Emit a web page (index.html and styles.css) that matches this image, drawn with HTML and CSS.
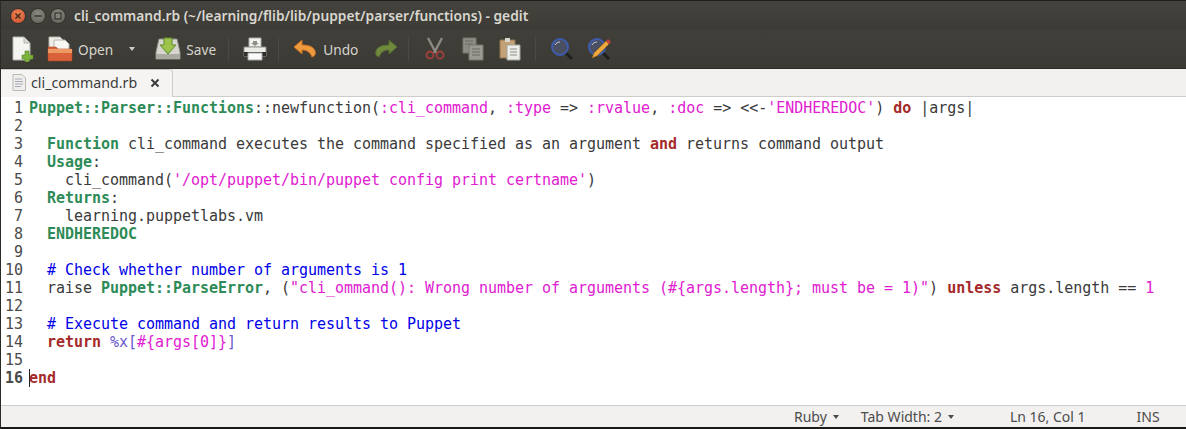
FILE: index.html
```html
<!DOCTYPE html>
<html lang="en">
<head>
<meta charset="utf-8">
<title>gedit</title>
<link rel="stylesheet" href="styles.css">
</head>
<body>
<div class="window">
  <header class="titlebar">
    <div class="wm">
      <span class="wm-btn close"><svg viewBox="0 0 10 10" width="10" height="10"><path d="M2.5 2.5l5 5M7.5 2.5l-5 5" stroke="#4a2a1c" stroke-width="1.6"/></svg></span>
      <span class="wm-btn"><svg viewBox="0 0 10 10" width="10" height="10"><path d="M1.5 5h7" stroke="#3b3a35" stroke-width="1.6"/></svg></span>
      <span class="wm-btn"><svg viewBox="0 0 10 10" width="10" height="10"><rect x="2" y="2" width="6" height="6" fill="none" stroke="#3b3a35" stroke-width="1.3"/></svg></span>
    </div>
    <span class="title">cli_command.rb (~/learning/flib/lib/puppet/parser/functions) - gedit</span>
  </header>

  <nav class="toolbar">
    <svg class="ic ic-new" viewBox="0 0 22 26" width="22" height="26"><path d="M1 1h11l6 6v17H1z" fill="#f4f4f0" stroke="#b5b5ae"/><path d="M12 1v6h6" fill="#d8d8d2" stroke="#b5b5ae"/><path d="M13 15h4v4h4v4h-4v3h-4v-3h-3v-4h3z" fill="#7cb33a" stroke="#56802a" stroke-width=".6"/></svg>
    <svg class="ic ic-open" viewBox="0 0 26 26" width="26" height="26"><path d="M2 1h11l4 4v8H2z" fill="#efefe9" stroke="#b5b5ae"/><path d="M7 4h11l4 4v6H7z" fill="#f7f7f3" stroke="#b5b5ae"/><path d="M1 11h8l2 2h14v12H1z" fill="#d9623a" stroke="#a9462a" stroke-width=".6"/><path d="M1 13h24v4H1z" fill="#ee9a63"/></svg>
    <span class="tb-label open-label">Open</span>
    <span class="arrow tb-arrow"></span>
    <svg class="ic ic-save" viewBox="0 0 26 26" width="26" height="26"><path d="M4 3h18l3 13v7H1v-7z" fill="#d6d6ce" stroke="#8d8d85"/><path d="M1 18h24v5H1z" fill="#a9a9a0"/><path d="M9 2h8v7h4l-8 9-8-9h4z" fill="#9cc44b" stroke="#5e8a2a"/></svg>
    <span class="tb-label save-label">Save</span>
    <span class="sep sep-a"></span>
    <svg class="ic ic-print" viewBox="0 0 24 24" width="24" height="24"><path d="M6 1h12v9H6z" fill="#f2f2ee" stroke="#aaa"/><path d="M10 4h4v2h2l-4 3-4-3h2z" fill="#8f8f88"/><path d="M1 10h22v9H1z" fill="#ecebe6" stroke="#8f8f88"/><path d="M1 15h22v4H1z" fill="#2e2e2a"/><path d="M5 16h14v7H5z" fill="#fafafa" stroke="#aaa"/></svg>
    <span class="sep sep-b"></span>
    <svg class="ic ic-undo" viewBox="0 0 24 20" width="24" height="20"><path d="M9 1L1 8l8 7v-4c5 0 8 2 10 7 3-1 4-3 3-6-1-4-6-6-13-6z" fill="#ee9a3e" stroke="#c96f22"/></svg>
    <span class="tb-label undo-label">Undo</span>
    <svg class="ic ic-redo" viewBox="0 0 24 20" width="24" height="20"><path d="M15 1l8 7-8 7v-4c-5 0-8 2-10 7-3-1-4-3-3-6 1-4 6-6 13-6z" fill="#6f8a3c" stroke="#556b2e"/></svg>
    <span class="sep sep-c"></span>
    <svg class="ic ic-cut" viewBox="0 0 20 24" width="20" height="24"><path d="M3 1l8 15M17 1L9 16" stroke="#8b8b84" stroke-width="2.4" fill="none"/><circle cx="5" cy="18" r="3.5" fill="none" stroke="#a33f3a" stroke-width="1.8"/><circle cx="15" cy="18" r="3.5" fill="none" stroke="#a33f3a" stroke-width="1.8"/></svg>
    <svg class="ic ic-copy" viewBox="0 0 22 24" width="22" height="24"><path d="M1 1h13v15H1z" fill="#8d8d86" stroke="#77776f"/><path d="M7 8h14v15H7z" fill="#9a9a93" stroke="#77776f"/><path d="M10 12h8M10 15h8M10 18h8M3 4h8M3 7h8" stroke="#6b6b64"/></svg>
    <svg class="ic ic-paste" viewBox="0 0 22 24" width="22" height="24"><path d="M1 3h15v18H1z" fill="#c2a176" stroke="#8f7450"/><path d="M6 1h5v4H6z" fill="#d9d9d2"/><path d="M8 8h13v15H8z" fill="#ececE8" stroke="#a5a59e"/><path d="M11 12h7M11 15h7M11 18h7" stroke="#8e8e87"/></svg>
    <span class="sep sep-d"></span>
    <svg class="ic ic-find" viewBox="0 0 24 24" width="24" height="24"><path d="M15 15l7 7" stroke="#1f1f1c" stroke-width="3"/><circle cx="10" cy="10" r="8" fill="#4a4f62" stroke="#3e5cb0" stroke-width="2"/><path d="M5 8c1-2 3-3 5-3" stroke="#c9d0e4" fill="none"/></svg>
    <svg class="ic ic-replace" viewBox="0 0 24 24" width="24" height="24"><path d="M15 15l7 7" stroke="#1f1f1c" stroke-width="3"/><circle cx="10" cy="10" r="8" fill="#4a4f62" stroke="#3e5cb0" stroke-width="2"/><path d="M5 8c1-2 3-3 5-3" stroke="#c9d0e4" fill="none"/><path d="M5 21l2-5L19 4l3 3L10 19z" fill="#eda93c" stroke="#8a5a1a" stroke-width=".6"/><path d="M19 4l2-2 3 3-2 2z" fill="#c9413a"/></svg>
  </nav>

  <div class="tabbar">
    <div class="tab">
      <svg viewBox="0 0 14 17" width="14" height="17"><path d="M1 .5h9l3.500 3.500v12.500H1z" fill="#eeeeea" stroke="#bbbbb4"/><path d="M3 5h7M3 7.500h8M3 10h8M3 12.500h6" stroke="#a9a9b8"/></svg>
      <span class="tab-name">cli_command.rb</span>
      <svg class="tab-x" viewBox="0 0 10 10" width="10" height="10"><path d="M1.500 1.500l7 7M8.500 1.500l-7 7" stroke="#3c3c3c" stroke-width="2"/></svg>
    </div>
  </div>

  <main class="editor">
    <div class="gutter">
      <div>1</div><div>2</div><div>3</div><div>4</div><div>5</div><div>6</div><div>7</div><div>8</div><div>9</div><div>10</div><div>11</div><div>12</div><div>13</div><div>14</div><div>15</div><div class="cur">16</div>
    </div>
    <div class="code">
      <div class="ln"><span class="t">Puppet::Parser::Functions</span>::newfunction(<span class="s">:cli_command</span>, <span class="s">:type</span> =&gt; <span class="s">:rvalue</span>, <span class="s">:doc</span> =&gt; &lt;&lt;-<span class="s">'ENDHEREDOC'</span>) <span class="k">do</span> |args|</div>
      <div class="ln"></div>
      <div class="ln">  <span class="t">Function</span> cli_command executes the command specified as an argument <span class="k">and</span> returns command output</div>
      <div class="ln">  <span class="t">Usage</span>:</div>
      <div class="ln">    cli_command(<span class="s">'/opt/puppet/bin/puppet config print certname'</span>)</div>
      <div class="ln">  <span class="t">Returns</span>:</div>
      <div class="ln">    learning.puppetlabs.vm</div>
      <div class="ln">  <span class="t">ENDHEREDOC</span></div>
      <div class="ln"></div>
      <div class="ln">  <span class="c"># Check whether number of arguments is 1</span></div>
      <div class="ln">  raise <span class="t">Puppet::ParseError</span>, (<span class="s">"cli_ommand(): Wrong number of arguments (#{args.length}; must be = 1)"</span>) <span class="k">unless</span> args.length == <span class="s">1</span></div>
      <div class="ln"></div>
      <div class="ln">  <span class="c"># Execute command and return results to Puppet</span></div>
      <div class="ln">  <span class="k">return</span> <span class="r">%x[</span><span class="s">#{args[0]}</span><span class="r">]</span></div>
      <div class="ln"></div>
      <div class="ln"><span class="caret"></span><span class="k">end</span></div>
    </div>
  </main>

  <footer class="statusbar">
    <span class="st st-lang">Ruby</span><span class="arrow st-arrow"></span>
    <span class="st st-tab">Tab Width: 2</span><span class="arrow st-arrow"></span>
    <span class="st st-pos">Ln 16, Col 1</span>
    <span class="st st-ins">INS</span>
  </footer>
</div>
</body>
</html>
```

FILE: styles.css
```css
* { box-sizing: border-box; }
html, body { margin: 0; padding: 0; height: 100%; overflow: hidden; background: #000; }
.window {
  width: 1186px; height: 429px;
  display: flex; flex-direction: column;
  border-left: 1px solid #2b2a26;
  border-bottom: 2px solid #1a1a18;
  border-top: 1px solid #1e1d1a;
  font-family: "Noto Sans", "Open Sans", sans-serif;
}
.titlebar {
  height: 29px; flex: none;
  display: flex; align-items: center;
  background: linear-gradient(#44433e, #3c3b36);
  padding-left: 9px;
}
.wm { display: flex; gap: 4px; width: 64px; }
.wm-btn {
  width: 16px; height: 16px; border-radius: 50%;
  background: radial-gradient(circle at 50% 35%, #8a8a82, #5f5e58);
  border: 1px solid #33322e;
  display: flex; align-items: center; justify-content: center;
}
.wm-btn svg { width: 10px; height: 10px; }
.wm-btn.close { background: radial-gradient(circle at 50% 35%, #ef8355, #c9502a); }
.title { color: #d9d7cf; font-size: 13.75px; font-weight: 600; white-space: nowrap; }

.toolbar {
  height: 39px; flex: none;
  display: flex; align-items: center;
  background: linear-gradient(#403f3a, #3b3a35);
  border-bottom: 1px solid #2c2b27;
  padding-left: 11px;
}
.ic { flex: none; }
.ic-open { margin-left: 13px; }
.tb-label { color: #d6d4cc; font-size: 13.7px; }
.open-label { margin-left: 5px; }
.arrow { display: inline-block; flex: none; width: 0; height: 0; border-left: 3.500px solid transparent; border-right: 3.500px solid transparent; border-top: 4px solid #cfcdc5; }
.tb-arrow { margin-left: 16px; }
.ic-save { margin-left: 20px; }
.save-label { margin-left: 5px; }
.sep { width: 1px; height: 24px; background: #4a4944; flex: none; }
.sep-a { margin-left: 12px; }
.ic-print { margin-left: 14px; }
.sep-b { margin-left: 11px; }
.ic-undo { margin-left: 14px; }
.undo-label { margin-left: 6px; }
.ic-redo { margin-left: 16px; }
.sep-c { margin-left: 10px; }
.ic-cut { margin-left: 16px; }
.ic-copy { margin-left: 17px; }
.ic-paste { margin-left: 15px; }
.sep-d { margin-left: 14px; }
.ic-find { margin-left: 14px; }
.ic-replace { margin-left: 13px; }

.tabbar {
  height: 28px; flex: none;
  background: #f2f1f0;
  border-bottom: 1px solid #cfcdc9;
  display: flex; align-items: flex-end;
}
.tab {
  height: 28px; width: 172px; margin-bottom: -1px;
  background: #f5f4f3;
  border: 1px solid #cfcdc9; border-bottom: 0; border-left: 0;
  border-top-right-radius: 4px;
  display: flex; align-items: center; padding: 0 0 2px 11px;
  color: #3c3c3c; font-size: 14.2px;
}
.tab-name { margin-left: 5px; }
.tab-x { margin-left: 13px; }

.editor {
  flex: 1; min-height: 0;
  display: flex; background: #fff;
  padding-top: 2px;
  font-family: "DejaVu Sans Mono", monospace;
  font-size: 15px; line-height: 18px;
  letter-spacing: -0.03px;
  color: #3a3a3a;
}
.gutter { width: 28px; flex: none; text-align: right; padding-right: 6px; color: #4a4a4a; }
.gutter .cur { font-weight: 700; }
.code { min-width: 0; }
.ln { height: 18px; white-space: pre; }
.t { color: #2e8b57; font-weight: 700; }
.s { color: #e020d0; }
.k { color: #a52a2a; font-weight: 700; }
.c { color: #0000e8; }
.r { color: #6a5acd; }
.caret { display: inline-block; width: 1px; height: 18px; background: #222; margin-right: -1px; vertical-align: top; }

.statusbar {
  height: 22px; flex: none;
  background: #f2f1f0;
  border-top: 1px solid #cfcdc9;
  display: flex; align-items: center;
  color: #4c4c4c; font-size: 14px;
  padding-left: 793px;
}
.st { white-space: nowrap; }
.st-arrow { border-top-color: #4c4c4c; margin-left: 6px; }
.st-tab { margin-left: 22px; }
.st-pos { margin-left: 56px; }
.st-ins { margin-left: 51px; }
```
